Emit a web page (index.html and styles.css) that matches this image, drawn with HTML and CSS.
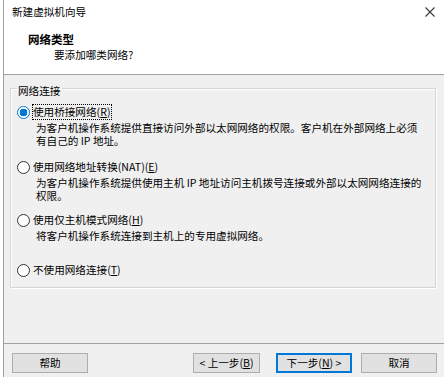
FILE: index.html
```html
<!DOCTYPE html>
<html lang="zh-CN">
<head>
  <meta charset="UTF-8">
  <meta name="viewport" content="width=device-width, initial-scale=1.0">
  <title>新建虚拟机向导</title>
  <link rel="stylesheet" href="styles.css">
</head>
<body>

  <div class="window">
    <header class="header">
      <div class="title-row">
        <span class="title">新建虚拟机向导</span>
        <svg class="close" width="10" height="10" viewBox="0 0 10 10">
          <path d="M0.5 0.5 L9.5 9.5 M9.5 0.5 L0.5 9.5" stroke="#3a3a3a" stroke-width="1.1" fill="none"/>
        </svg>
      </div>
      <div class="heading">网络类型</div>
      <div class="subheading">要添加哪类网络?</div>
    </header>

    <main class="content">
      <fieldset class="group">
        <legend>网络连接</legend>

        <div class="option">
          <label class="choice">
            <span class="radio checked"></span>
            <span class="label-text focused">使用桥接网络(<u>R</u>)</span>
          </label>
          <p class="desc">为客户机操作系统提供直接访问外部以太网网络的权限。客户机在外部网络上必须<br>有自己的 IP 地址。</p>
        </div>

        <div class="option opt-nat">
          <label class="choice">
            <span class="radio"></span>
            <span class="label-text">使用网络地址转换(NAT)(<u>E</u>)</span>
          </label>
          <p class="desc">为客户机操作系统提供使用主机 IP 地址访问主机拨号连接或外部以太网网络连接的<br>权限。</p>
        </div>

        <div class="option opt-host">
          <label class="choice">
            <span class="radio"></span>
            <span class="label-text">使用仅主机模式网络(<u>H</u>)</span>
          </label>
          <p class="desc">将客户机操作系统连接到主机上的专用虚拟网络。</p>
        </div>

        <div class="option opt-none">
          <label class="choice">
            <span class="radio"></span>
            <span class="label-text">不使用网络连接(<u>T</u>)</span>
          </label>
        </div>
      </fieldset>
    </main>

    <footer class="footer">
      <button class="btn btn-help">帮助</button>
      <span class="spacer"></span>
      <button class="btn btn-back">&lt; 上一步(<u>B</u>)</button>
      <button class="btn btn-next">下一步(<u>N</u>) &gt;</button>
      <button class="btn btn-cancel">取消</button>
    </footer>
  </div>

</body>
</html>
```

FILE: styles.css
```css
* {
  box-sizing: border-box;
}
html, body {
  margin: 0;
  height: 100%;
}
body {
  padding-left: 3px;
  background: #fff;
  font-family: "Noto Sans CJK SC", "Liberation Sans", sans-serif;
  font-size: 10.6px;
  color: #000;
}
.window {
  height: 377px;
  border-left: 1px solid #a0a0a0;
  background: #f0f0f0;
}

/* header */
.header {
  height: 75px;
  padding: 4px 9px 0 8px;
  background: #fff;
  border-bottom: 1px solid #a0a0a0;
}
.title-row {
  display: flex;
  justify-content: space-between;
  align-items: center;
  height: 16px;
  line-height: 16px;
}
.close {
  display: block;
}
.heading {
  margin: 11px 0 0 16px;
  height: 16px;
  line-height: 16px;
  font-size: 11.5px;
  font-weight: bold;
}
.subheading {
  margin-left: 42px;
  height: 16px;
  line-height: 16px;
}

/* group box */
.content {
  height: 268px;
  padding: 3px 8px 0 6px;
}
.group {
  margin: 0;
  padding: 6px 6px 9px 6px;
  border: 1px solid #d5d5d5;
  box-shadow: 1px 1px 0 #fff, inset 1px 1px 0 #fff;
}
.group legend {
  padding: 6px 2px 0 1px;
  line-height: 14px;
}
.choice {
  display: flex;
  align-items: center;
  height: 16px;
}
.radio {
  width: 13px;
  height: 13px;
  margin-right: 2px;
  border: 1px solid #333;
  border-radius: 50%;
  background: #fff;
}
.radio.checked {
  border-color: #0078d7;
  background: radial-gradient(circle, #0078d7 0 3.6px, #fff 4.1px);
}
.label-text {
  padding: 0 1px 0 0;
  line-height: 14px;
  border: 1px solid transparent;
  white-space: nowrap;
}
.label-text.focused {
  border: 1px dotted #000;
}
.desc {
  margin: 1px 0 0 19px;
  line-height: 13px;
  white-space: nowrap;
}
.opt-nat {
  margin-top: 12px;
}
.opt-host {
  margin-top: 10px;
}
.opt-none {
  margin-top: 20px;
}

/* buttons */
.footer {
  display: flex;
  align-items: flex-start;
  padding: 9px 7px 0 8px;
  border-top: 1px solid #a0a0a0;
}
.spacer {
  flex: 1;
}
.btn {
  height: 20px;
  width: 76px;
  padding: 0;
  background: #e1e1e1;
  border: 1px solid #adadad;
  font-family: inherit;
  font-size: 10.6px;
  color: #000;
  line-height: 16px;
}
.btn-back {
  width: 67px;
}
.btn-next {
  margin-left: 16px;
  border: 2px solid #0078d7;
}
.btn-cancel {
  margin-left: 9px;
}
```
